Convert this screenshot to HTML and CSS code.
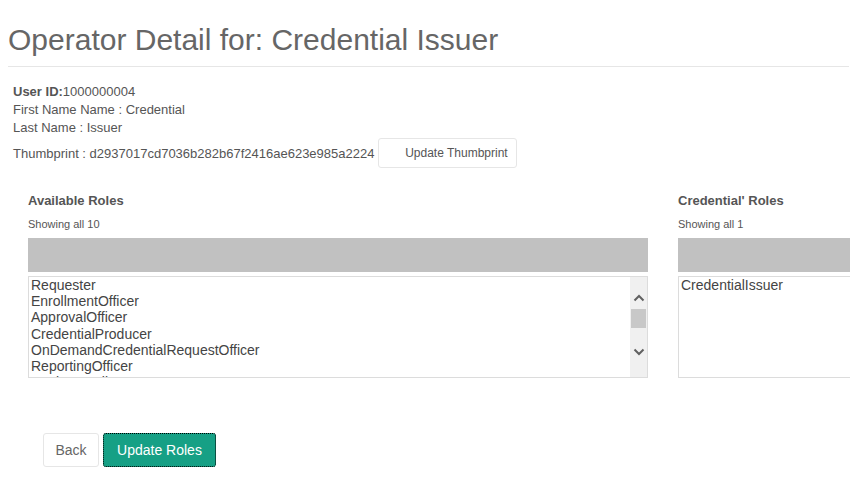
FILE: index.html
```html
<!DOCTYPE html>
<html>
<head>
<meta charset="utf-8">
<link rel="stylesheet" href="styles.css">
</head>
<body>
<div class="page">
  <h1 class="title">Operator Detail for: Credential Issuer</h1>
  <div class="rule"></div>
  <div class="info">
    <div class="line"><b>User ID:</b>1000000004</div>
    <div class="line">First Name Name : Credential</div>
    <div class="line">Last Name : Issuer</div>
    <div class="thumb-row">
      <span>Thumbprint : d2937017cd7036b282b67f2416ae623e985a2224</span>
      <button class="btn-thumb">Update Thumbprint</button>
    </div>
  </div>
  <div class="panels">
    <div class="panel">
      <div class="panel-title">Available Roles</div>
      <div class="panel-count">Showing all 10</div>
      <div class="bar"></div>
      <div class="listbox">
        <div class="items">
          <div class="item">Requester</div>
          <div class="item">EnrollmentOfficer</div>
          <div class="item">ApprovalOfficer</div>
          <div class="item">CredentialProducer</div>
          <div class="item">OnDemandCredentialRequestOfficer</div>
          <div class="item">ReportingOfficer</div>
          <div class="item">ReviewApplicant</div>
        </div>
        <div class="scrollbar">
          <svg class="arrow up" width="12" height="8" viewBox="0 0 12 8"><path d="M1.5 6.5 L6 2 L10.5 6.5" fill="none" stroke="#606060" stroke-width="2"/></svg>
          <div class="thumb"></div>
          <svg class="arrow down" width="12" height="8" viewBox="0 0 12 8"><path d="M1.5 1.5 L6 6 L10.5 1.5" fill="none" stroke="#606060" stroke-width="2"/></svg>
        </div>
      </div>
    </div>
    <div class="panel">
      <div class="panel-title">Credential' Roles</div>
      <div class="panel-count">Showing all 1</div>
      <div class="bar"></div>
      <div class="listbox">
        <div class="items">
          <div class="item">CredentialIssuer</div>
        </div>
      </div>
    </div>
  </div>
  <div class="actions">
    <button class="btn-back">Back</button>
    <button class="btn-primary">Update Roles</button>
  </div>
</div>
</body>
</html>
```

FILE: styles.css
```css
html, body {
  margin: 0;
  padding: 0;
  background: #fff;
  overflow: hidden;
}
body {
  font-family: "Liberation Sans", Arial, sans-serif;
  color: #555;
  width: 850px;
  height: 485px;
}
.page {
  padding-top: 23px;
}
.title {
  margin: 0 0 0 8px;
  font-size: 30px;
  font-weight: normal;
  line-height: 34px;
  color: #666;
}
.rule {
  margin: 9px 1px 0 8px;
  height: 1px;
  background: #e6e6e6;
}
.info {
  padding: 16px 0 0 13px;
  font-size: 13px;
  color: #555;
}
.line {
  line-height: 18px;
  height: 18px;
}
.line b {
  font-weight: bold;
}
.thumb-row {
  display: flex;
  align-items: center;
  height: 30px;
  margin-top: 1px;
}
.btn-thumb {
  margin-left: 4px;
  height: 30px;
  width: 139px;
  padding: 0 0 0 17px;
  background: #fff;
  border: 1px solid #e6e6e6;
  border-radius: 3px;
  font-family: "Liberation Sans", Arial, sans-serif;
  font-size: 12px;
  color: #555;
}
.panels {
  display: flex;
  gap: 30px;
  padding: 25px 0 0 28px;
}
.panel {
  flex: 0 0 620px;
}
.panel-title {
  font-size: 13px;
  font-weight: bold;
  line-height: 16px;
  color: #555;
}
.panel-count {
  font-size: 11px;
  line-height: 14px;
  margin-top: 8px;
  color: #555;
}
.bar {
  margin-top: 7px;
  height: 34px;
  background: #c1c1c1;
}
.listbox {
  margin-top: 4px;
  height: 100px;
  border: 1px solid #dcdcdc;
  display: flex;
  overflow: hidden;
}
.items {
  flex: 1;
  overflow: hidden;
  padding: 0 0 0 2px;
}
.item {
  font-size: 14px;
  line-height: 16.2px;
  height: 16.2px;
  color: #444;
  white-space: nowrap;
}
.scrollbar {
  flex: 0 0 17px;
  background: #f0f0f0;
  display: flex;
  flex-direction: column;
  align-items: center;
}
.arrow.up {
  margin-top: 17px;
}
.thumb {
  margin-top: 7px;
  width: 15px;
  height: 19px;
  background: #c8c8c8;
}
.arrow.down {
  margin-top: 20px;
}
.actions {
  display: flex;
  gap: 4px;
  padding: 55px 0 0 43px;
}
.actions button {
  font-family: "Liberation Sans", Arial, sans-serif;
  font-size: 14px;
  height: 34px;
  border-radius: 3px;
}
.btn-back {
  width: 56px;
  background: #fff;
  border: 1px solid #e6e6e6;
  color: #666;
  padding: 0;
}
.btn-primary {
  width: 113px;
  background: #16a085;
  border: 1px solid #16a085;
  color: #fff;
  padding: 0;
  outline: 1px dotted #000;
  outline-offset: -1px;
}
```
